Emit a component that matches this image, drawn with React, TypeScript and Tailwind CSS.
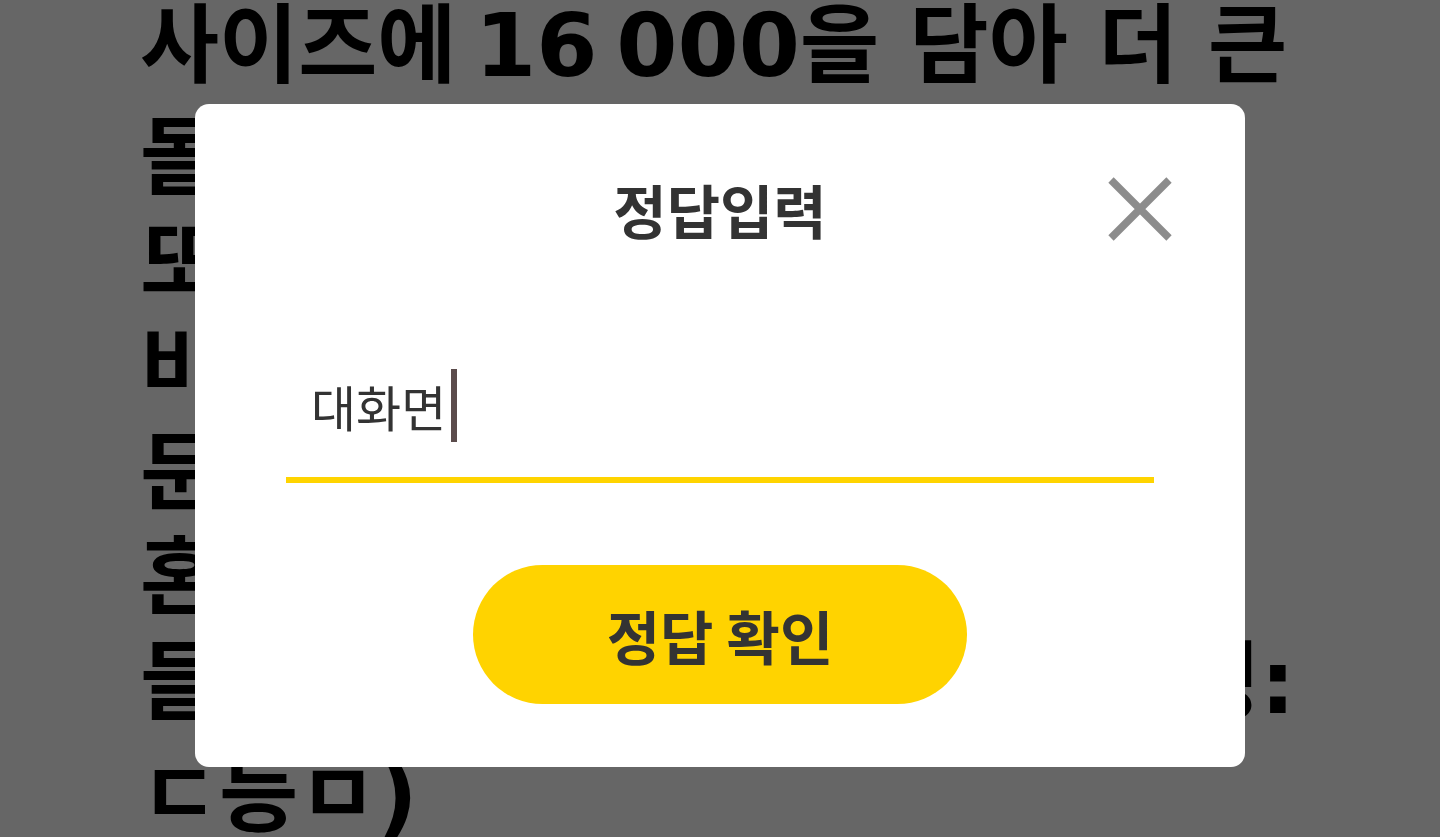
const LATIN = "font-['DejaVu_Sans',sans-serif] text-[88px]";

function CloseIcon() {
  return (
    <svg width="64" height="64" viewBox="0 0 64 64" fill="none">
      <path d="M3 3L61 61M61 3L3 61" stroke="#8c8c8c" strokeWidth="7.5" />
    </svg>
  );
}

export default function App() {
  return (
    <div className="relative h-[837px] w-full overflow-hidden bg-white font-['Noto_Sans_CJK_KR','Noto_Sans',sans-serif]">
      {/* Page behind the dialog */}
      <div className="-mt-[14px] pl-[140px] text-[86px] font-bold leading-[105px] text-black [word-spacing:11px]">
        <p className="whitespace-nowrap">
          사이즈에<span className={`${LATIN} [word-spacing:-12px]`}> 16 000</span>을 담아 더 큰
        </p>
        <p className="whitespace-nowrap">돌아보는 재미까지 담은</p>
        <p className="whitespace-nowrap">또렷한 화면으로 만나는</p>
        <p className="whitespace-nowrap">비교할 수 없는 선명함</p>
        <p className="whitespace-nowrap">둔탁함 없는 가벼운 무게</p>
        <p className="whitespace-nowrap">혼자서도 충분한 즐거움</p>
        <p className="whitespace-nowrap">
          들을 수 있는 풍부한사운드구성<span className={LATIN}>:</span>
        </p>
        <p className="whitespace-nowrap">
          ㄷ등ㅁ<span className={LATIN}>)</span>
        </p>
      </div>

      {/* Dim + dialog */}
      <div className="fixed inset-0 flex items-start justify-center bg-black/60 pt-[104px]">
        <div className="relative flex h-[663px] w-[1050px] flex-col items-center rounded-[14px] bg-white">
          <button className="absolute right-[73px] top-[73px]">
            <CloseIcon />
          </button>

          <h2 className="mt-[76px] text-[58px] font-bold leading-none text-[#333333]">정답입력</h2>

          <div className="mt-[131px] flex w-[868px] items-center border-b-[6px] border-[#FFD400] pb-[35px] pl-[25px]">
            <span className="text-[49px] leading-none text-[#333333]">대화면</span>
            <span className="ml-[5px] h-[73px] w-[6px] bg-[#5b4c4c]" />
          </div>

          <button className="mt-[82px] flex h-[139px] w-[494px] items-center justify-center rounded-full bg-[#FFD300] text-[58px] font-bold leading-none text-[#333333]">
            정답 확인
          </button>
        </div>
      </div>
    </div>
  );
}
